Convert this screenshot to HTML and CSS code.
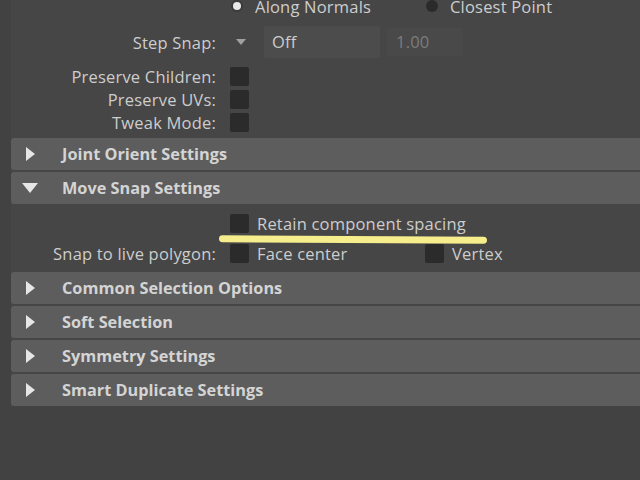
FILE: index.html
```html
<!DOCTYPE html>
<html lang="en">
<head>
    <meta charset="UTF-8">
    <title>Move Tool Settings</title>
    <link rel="stylesheet" href="styles.css">
</head>
<body>

<div class="panel">
    <div class="radio-row">
        <label class="radio on"><span class="dot"></span>Along Normals</label>
        <label class="radio"><span class="dot"></span>Closest Point</label>
    </div>

    <div class="form-row snap-row">
        <span class="label">Step Snap:</span>
        <div class="controls">
            <span class="drop-arrow"></span>
            <div class="field">Off</div>
            <div class="field num">1.00</div>
        </div>
    </div>

    <div class="form-row check-row">
        <span class="label">Preserve Children:</span>
        <div class="controls"><span class="box"></span></div>
    </div>
    <div class="form-row check-row">
        <span class="label">Preserve UVs:</span>
        <div class="controls"><span class="box"></span></div>
    </div>
    <div class="form-row check-row">
        <span class="label">Tweak Mode:</span>
        <div class="controls"><span class="box"></span></div>
    </div>

    <div class="frames">
        <div class="frame">
            <div class="frame-header"><span class="arrow right"></span>Joint Orient Settings</div>
        </div>
        <div class="frame open">
            <div class="frame-header"><span class="arrow down"></span>Move Snap Settings</div>
            <div class="frame-body">
                <div class="form-row body-row">
                    <span class="label"></span>
                    <div class="controls">
                        <label class="check"><span class="box"></span>Retain component spacing</label>
                    </div>
                    <span class="marker"></span>
                </div>
                <div class="form-row body-row">
                    <span class="label">Snap to live polygon:</span>
                    <div class="controls">
                        <label class="check wide"><span class="box"></span>Face center</label>
                        <label class="check"><span class="box"></span>Vertex</label>
                    </div>
                </div>
            </div>
        </div>
        <div class="frame">
            <div class="frame-header"><span class="arrow right"></span>Common Selection Options</div>
        </div>
        <div class="frame">
            <div class="frame-header"><span class="arrow right"></span>Soft Selection</div>
        </div>
        <div class="frame">
            <div class="frame-header"><span class="arrow right"></span>Symmetry Settings</div>
        </div>
        <div class="frame">
            <div class="frame-header"><span class="arrow right"></span>Smart Duplicate Settings</div>
        </div>
    </div>
</div>

</body>
</html>
```

FILE: styles.css
```css
html, body {
    margin: 0;
    padding: 0;
    background: #424242;
    height: 100%;
    overflow: hidden;
}

body {
    font-family: 'Open Sans', 'Noto Sans', sans-serif;
    font-size: 16.5px;
    letter-spacing: 0.2px;
    color: #cdcdcd;
    padding-left: 11px;
}

.panel {
    background: #464646;
}

.radio-row {
    height: 16px;
    display: flex;
    padding-left: 220px;
}
.radio {
    display: flex;
    align-items: center;
    gap: 12px;
    height: 16px;
    margin-top: -2px;
}
.radio.on {
    width: 195px;
}
.radio .dot {
    width: 12px;
    height: 12px;
    border-radius: 50%;
    background: #2a2a2a;
    box-sizing: border-box;
}
.radio.on .dot {
    background: #e8e8e8;
    border: 2px solid #3a3a3a;
}

.form-row {
    display: grid;
    grid-template-columns: 205px 1fr;
    column-gap: 14px;
    align-items: center;
    position: relative;
}
.label {
    text-align: right;
    white-space: nowrap;
}
.controls {
    display: flex;
    align-items: center;
}

.snap-row {
    height: 32px;
    margin-top: 10px;
    margin-bottom: 7px;
}
.drop-arrow {
    width: 0;
    height: 0;
    border-left: 5px solid transparent;
    border-right: 5px solid transparent;
    border-top: 6px solid #a0a0a0;
    margin-left: 6px;
    margin-right: 18px;
}
.field {
    width: 116px;
    height: 32px;
    line-height: 32px;
    box-sizing: border-box;
    padding-left: 8px;
    background: #4c4c4c;
    border-radius: 2px;
}
.field.num {
    width: 76px;
    height: 28px;
    line-height: 28px;
    margin-left: 7px;
    background: #494949;
    color: #7c7c7c;
    padding-left: 9px;
}

.check-row {
    height: 23px;
}
.box {
    display: inline-block;
    flex: none;
    width: 19px;
    height: 19px;
    background: #2b2b2b;
    border-radius: 2px;
}

.frames {
    margin-top: 4px;
    display: flex;
    flex-direction: column;
    gap: 2px;
}
.frame-header {
    height: 32px;
    line-height: 32px;
    background: #5d5d5d;
    border-radius: 3px 0 0 3px;
    font-weight: bold;
    font-size: 16.3px;
    letter-spacing: 0;
    color: #d4d4d4;
    padding-left: 51px;
    position: relative;
}
.arrow {
    position: absolute;
    width: 0;
    height: 0;
}
.arrow.right {
    left: 15px;
    top: 9px;
    border-top: 7px solid transparent;
    border-bottom: 7px solid transparent;
    border-left: 9px solid #e6e6e6;
}
.arrow.down {
    left: 11px;
    top: 11px;
    border-left: 8px solid transparent;
    border-right: 8px solid transparent;
    border-top: 10px solid #e6e6e6;
}

.frame-body {
    padding: 8px 0 8px;
    display: flex;
    flex-direction: column;
    gap: 10px;
}
.body-row {
    height: 20px;
}
.check {
    display: flex;
    align-items: center;
    gap: 8px;
    white-space: nowrap;
}
.check.wide {
    width: 195px;
}

/* highlighter stroke drawn over the first option */
.marker {
    position: absolute;
    left: 208px;
    top: 24px;
    width: 268px;
    height: 7px;
    background: #f6ee8c;
    border-radius: 4px;
    transform: rotate(0.3deg);
}
```
